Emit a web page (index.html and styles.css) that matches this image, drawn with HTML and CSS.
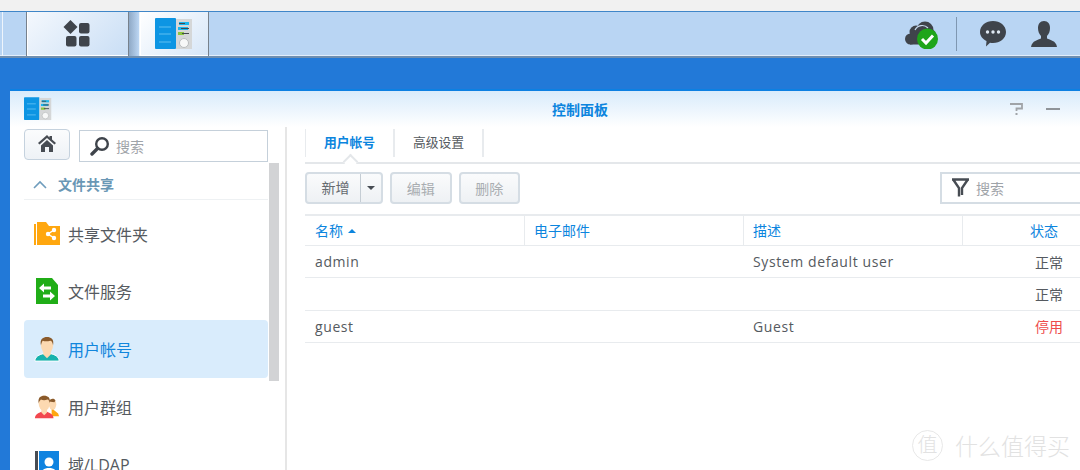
FILE: index.html
```html
<!DOCTYPE html>
<html lang="zh-CN">
<head>
    <meta charset="UTF-8">
    <title>控制面板</title>
    <link rel="stylesheet" href="styles.css">
</head>
<body>
    <svg class="defs" width="0" height="0">
        <symbol id="panel-icon" viewBox="0 0 38 32">
            <rect x="0" y="0" width="21" height="31" rx="1" fill="#0d95e3"/>
            <rect x="21" y="1" width="16" height="30" fill="#d5d7d8"/>
            <path d="M4 9h12M4 16h12M4 24h12" stroke="#5fc0f2" stroke-width="1.2"/>
            <rect x="24" y="4" width="10" height="3" fill="#19b6ee"/>
            <rect x="23" y="9" width="10" height="3" fill="#19b6ee"/>
            <rect x="23" y="14" width="6" height="3" fill="#8cc63f"/>
            <path d="M24 5.500h6M26 10.500h8M27 15.500h7" stroke="#44494f" stroke-width="1.200"/>
            <circle cx="29" cy="25" r="4.500" fill="#f7f8f8" stroke="#b9bcbe"/>
        </symbol>
    </svg>

    <div class="top-strip"></div>

    <header class="taskbar">
        <div class="task-gap"></div>
        <div class="task-btn task-main">
            <svg class="apps-icon" width="28" height="28" viewBox="0 0 28 28" fill="#3f444b">
                <path d="M7.500 0l7 7-7 7-7-7z"/>
                <rect x="16" y="3" width="10.500" height="10.500" rx="2"/>
                <rect x="3" y="16" width="10.500" height="10.500" rx="2"/>
                <rect x="16" y="16" width="10.500" height="10.500" rx="2"/>
            </svg>
        </div>
        <div class="task-space"></div>
        <div class="task-btn task-app">
            <svg width="38" height="32"><use href="#panel-icon"/></svg>
        </div>
        <div class="tray">
            <svg class="tray-cloud" width="34" height="30" viewBox="0 0 34 30">
                <g fill="#3f444b">
                    <circle cx="5.500" cy="20" r="5.500"/>
                    <circle cx="11" cy="13" r="6.500"/>
                    <circle cx="20" cy="11" r="8.500"/>
                    <circle cx="25" cy="16" r="6"/>
                    <rect x="5" y="16" width="24" height="9.500"/>
                </g>
                <path d="M10 11a8 8 0 0 1 13-2" fill="none" stroke="#c9dcf1" stroke-width="1.200"/>
                <circle cx="22.500" cy="20" r="10.500" fill="#1fa51a"/>
                <path d="M17 20l4 4 7-7.500" fill="none" stroke="#fff" stroke-width="3"/>
            </svg>
            <div class="tray-line"></div>
            <svg class="tray-chat" width="26" height="26" viewBox="0 0 26 26">
                <path d="M13 0c7 0 13 4.500 13 11s-6 11-13 11c-1 0-2 0-3-.300L6 25.500l.500-5.500C2.500 18 0 15 0 11 0 4.500 6 0 13 0z" fill="#3f444b"/>
                <circle cx="7.500" cy="11" r="1.700" fill="#dfe8f2"/>
                <circle cx="13" cy="11" r="1.700" fill="#dfe8f2"/>
                <circle cx="18.500" cy="11" r="1.700" fill="#dfe8f2"/>
            </svg>
            <svg class="tray-user" width="26" height="26" viewBox="0 0 26 26">
                <path d="M13 0c4 0 6 3 6 7 0 3-1 6-3 8v2.500c3 1.500 9 2 10 8.500H0c1-6.500 7-7 10-8.500V15c-2-2-3-5-3-8 0-4 2-7 6-7z" fill="#3f444b"/>
            </svg>
        </div>
    </header>

    <div class="desktop">
        <section class="window">
            <div class="win-head">
                <svg class="win-icon" width="28" height="24"><use href="#panel-icon"/></svg>
                <h1 class="win-title">控制面板</h1>
                <div class="win-tools">
                    <svg class="win-help" width="13" height="12" viewBox="0 0 13 12">
                        <path d="M0 1h12v4.500H6.500V8" fill="none" stroke="#a0a4a8" stroke-width="1.800"/>
                        <rect x="5.500" y="10" width="2" height="2" fill="#a0a4a8"/>
                    </svg>
                    <span class="win-min"></span>
                </div>
            </div>
            <div class="win-body">
                <aside class="sidebar">
                    <div class="side-top">
                        <button class="home-btn">
                            <svg width="18" height="17" viewBox="0 0 18 17" fill="#474c53">
                                <path d="M9 0L0 8l1.500 1.500L9 3l7.500 6.500L18 8l-4-3.500V1h-2.500v1.500z"/>
                                <path d="M3 10.500L9 5l6 5.500V17h-4v-5H7v5H3z"/>
                            </svg>
                        </button>
                        <div class="side-search">
                            <svg width="20" height="20" viewBox="0 0 20 20">
                                <circle cx="12" cy="8" r="5.800" fill="none" stroke="#3f444b" stroke-width="2.400"/>
                                <path d="M7.500 12.500L2 18" stroke="#3f444b" stroke-width="3.400" stroke-linecap="round"/>
                            </svg>
                            <span>搜索</span>
                        </div>
                    </div>
                    <div class="side-scroll">
                        <div class="side-list">
                            <div class="side-group">
                                <svg width="14" height="9" viewBox="0 0 14 9"><path d="M1 8l6-6 6 6" fill="none" stroke="#6f9dbd" stroke-width="1.600"/></svg>
                                <span>文件共享</span>
                            </div>
                            <div class="side-item">
                                <svg width="26" height="24" viewBox="0 0 26 24">
                                    <path d="M0 2h2v21H0z" fill="#ffa70f"/>
                                    <path d="M3 23V0h9l3 4h11v19z" fill="#ffa70f"/>
                                    <path d="M20 8l-6 4 6 4" fill="none" stroke="#fff" stroke-width="1.500"/>
                                    <circle cx="20" cy="8" r="2.200" fill="#fff"/>
                                    <circle cx="14" cy="12" r="2.200" fill="#fff"/>
                                    <circle cx="20" cy="16" r="2.200" fill="#fff"/>
                                </svg>
                                <span>共享文件夹</span>
                            </div>
                            <div class="side-item">
                                <svg width="26" height="26" viewBox="0 0 26 26">
                                    <path d="M2 0h16l6 7v19H2z" fill="#20ad17"/>
                                    <path d="M5 10l5-4.500v3h7v3h-7v3zM21 18l-5-4.500v3H9v3h7v3z" fill="#fff"/>
                                </svg>
                                <span>文件服务</span>
                            </div>
                            <div class="side-item active">
                                <svg width="26" height="26" viewBox="0 0 28 28">
                                    <path d="M1 27c0-5 5-7 9-8h8c4 1 9 3 9 8z" fill="#17b2ad" stroke="#fff"/>
                                    <path d="M10 17h8v3l-4 4-4-4z" fill="#fcd9b1"/>
                                    <ellipse cx="14" cy="10" rx="6.500" ry="9" fill="#fcd9b1"/>
                                    <path d="M7.500 10C6 3 10 1 14 1s8 2 6.500 9c-.5-3-1.500-5-3-5-3 1-6 1-8 0-1 1-1.500 3-2 5z" fill="#8a5a2b"/>
                                </svg>
                                <span>用户帐号</span>
                            </div>
                            <div class="side-item">
                                <svg width="26" height="26" viewBox="0 0 28 26">
                                    <path d="M19 5c3 0 4 3 3 6l-1 5 5 4 1 3H19z" fill="#ffa70f"/>
                                    <ellipse cx="20" cy="10" rx="4" ry="6" fill="#fcd9b1"/>
                                    <path d="M16 7c1-3 6-4 7-1l-1 2z" fill="#8a5a2b"/>
                                    <path d="M1 25c0-4 4-6 7-7h6c3 1 7 3 7 7z" fill="#f2484f"/>
                                    <path d="M8 15h6v4l-3 3-3-3z" fill="#fcd9b1"/>
                                    <ellipse cx="11" cy="9" rx="6" ry="8.500" fill="#fcd9b1"/>
                                    <path d="M5 9C4 3 7 1 11 1s7 2 6 8c-.5-2-1-4-2.500-4-2.500 1-5 1-7 0-1 1-2 2-2.500 4z" fill="#8a5a2b"/>
                                </svg>
                                <span>用户群组</span>
                            </div>
                            <div class="side-item">
                                <svg width="26" height="26" viewBox="0 0 26 26">
                                    <rect x="1" y="0" width="3" height="26" fill="#474c53"/>
                                    <rect x="5" y="0" width="20" height="26" fill="#0f83e0"/>
                                    <circle cx="15" cy="11" r="4.500" fill="#fff"/>
                                    <path d="M7 23c0-4 4-6 8-6s8 2 8 6z" fill="#fff"/>
                                </svg>
                                <span>域/LDAP</span>
                            </div>
                        </div>
                        <div class="side-bar"></div>
                    </div>
                </aside>
                <main class="content">
                    <nav class="tabs">
                        <div class="tab current">用户帐号</div>
                        <div class="tab">高级设置</div>
                    </nav>
                    <div class="toolbar">
                        <div class="btn split">
                            <span class="split-label">新增</span>
                            <span class="split-arrow"></span>
                        </div>
                        <div class="btn off">编辑</div>
                        <div class="btn off">删除</div>
                        <div class="filter">
                            <svg width="19" height="20" viewBox="0 0 19 20">
                                <path d="M1 1.500h17M2.500 2l5.500 8v8.500M16.500 2L11 10v7" fill="none" stroke="#474c53" stroke-width="2.400"/>
                            </svg>
                            <span>搜索</span>
                        </div>
                    </div>
                    <div class="grid-table">
                        <div class="grid-row grid-head">
                            <div class="cell">名称 <i class="sort"></i></div>
                            <div class="cell">电子邮件</div>
                            <div class="cell">描述</div>
                            <div class="cell status">状态</div>
                        </div>
                        <div class="grid-row">
                            <div class="cell">admin</div>
                            <div class="cell"></div>
                            <div class="cell">System default user</div>
                            <div class="cell status">正常</div>
                        </div>
                        <div class="grid-row">
                            <div class="cell"></div>
                            <div class="cell"></div>
                            <div class="cell"></div>
                            <div class="cell status">正常</div>
                        </div>
                        <div class="grid-row">
                            <div class="cell">guest</div>
                            <div class="cell"></div>
                            <div class="cell">Guest</div>
                            <div class="cell status stopped">停用</div>
                        </div>
                    </div>
                </main>
            </div>
        </section>
    </div>

    <div class="watermark">
        <span class="mark-seal">值</span>
        <span>什么值得买</span>
    </div>
</body>
</html>
```

FILE: styles.css
```css
html, body {
    margin: 0;
    height: 470px;
    overflow: hidden;
}
body {
    position: relative;
    font-family: "Open Sans", "Noto Sans CJK SC", sans-serif;
    font-size: 14px;
    color: #555a60;
    background: #2279d8;
}
.defs {
    position: absolute;
}
.top-strip {
    height: 11px;
    background: #f1f1f1;
}

/* barra superior */
.taskbar {
    display: flex;
    height: 47px;
    padding-left: 2px;
    box-sizing: border-box;
    background: #b9d5f3;
    border-top: 1px solid #3f86c8;
    border-bottom: 2px solid #6f8fb0;
    box-shadow: inset 0 -1px 0 #e4eefa;
}
.task-gap {
    width: 23px;
    border-left: 1px solid #eef5fc;
}
.task-btn {
    display: flex;
    align-items: center;
    justify-content: center;
    border-left: 1px solid #77818c;
    border-right: 1px solid #77818c;
    background: linear-gradient(135deg, #f4f8fd, #c9def5);
    box-shadow: inset 1px 0 0 #fff, inset 0 -1px 0 #fff;
}
.task-main {
    width: 101px;
}
.apps-icon {
    margin-left: -2px;
}
.task-space {
    width: 10px;
    background: linear-gradient(90deg, #8fa9c6, #bcd6f3);
}
.task-app {
    width: 68px;
    border-left-color: #eef5fc;
    background: linear-gradient(135deg, #fff, #d6e6f8);
}
.tray {
    display: flex;
    flex: 1;
    align-items: center;
    justify-content: flex-end;
    padding-right: 23px;
}
.tray-cloud {
    margin-right: 17px;
}
.tray-line {
    width: 1px;
    height: 34px;
    margin-right: 23px;
    background: #7f97b1;
}
.tray-chat {
    margin-right: 25px;
}

/* ventana */
.desktop {
    height: 412px;
    padding: 31px 0 0 10px;
    box-sizing: border-box;
    overflow: hidden;
}
.window {
    height: 381px;
    background: #fff;
    border-top: 2px solid #0c80e2;
}
.win-head {
    display: flex;
    align-items: center;
    height: 36px;
    background: linear-gradient(180deg, #d8ebfb, #fff);
}
.win-icon {
    margin-left: 14px;
}
.win-title {
    margin: 0 0 0 500px;
    font-size: 14px;
    font-weight: 700;
    color: #0c85de;
}
.win-tools {
    display: flex;
    align-items: center;
    margin-left: auto;
    padding-right: 20px;
}
.win-help {
    margin-right: 23px;
}
.win-min {
    width: 14px;
    height: 2px;
    background: #8f9499;
}
.win-body {
    display: flex;
    height: 343px;
}

/* columna lateral */
.sidebar {
    flex: none;
    width: 261px;
    margin-right: 18px;
    padding-left: 14px;
    border-right: 2px solid #e6e6e6;
}
.side-top {
    display: flex;
    gap: 9px;
    height: 36px;
    padding-top: 2px;
    box-sizing: border-box;
}
.home-btn {
    width: 46px;
    height: 31px;
    padding: 0;
    border: 1px solid #c5d2de;
    border-radius: 4px;
    background: linear-gradient(180deg, #fbfcfd, #eef2f6);
}
.side-search {
    display: flex;
    align-items: center;
    gap: 6px;
    width: 189px;
    height: 32px;
    margin-top: 1px;
    padding-left: 10px;
    border: 1px solid #c5d0da;
    box-sizing: border-box;
    font-size: 14px;
    color: #9fa4a9;
}
.side-scroll {
    display: flex;
}
.side-list {
    width: 244px;
}
.side-bar {
    width: 10px;
    height: 218px;
    margin-left: 1px;
    background: #d2d3d5;
}
.side-group {
    display: flex;
    align-items: center;
    gap: 11px;
    height: 37px;
    padding: 6px 0 0 9px;
    border-bottom: 1px solid #eef1f3;
    box-sizing: border-box;
    font-weight: 700;
    color: #6a97b5;
}
.side-item {
    display: flex;
    align-items: center;
    gap: 8px;
    height: 57.6px;
    padding-left: 10px;
    border-radius: 4px;
    font-size: 16px;
}
.side-item:nth-child(2) {
    margin-top: 5px;
}
.side-item svg {
    flex: none;
}
.side-item.active {
    background: #d9ecfc;
    color: #1186dc;
}

/* contenido */
.content {
    flex: 1;
    min-width: 0;
}
.tabs {
    display: flex;
    height: 35px;
    border-bottom: 2px solid #e4e7ea;
}
.tab {
    width: 89px;
    height: 28px;
    margin-top: 2px;
    border-right: 2px solid #e8ebee;
    box-sizing: border-box;
    font-size: 12.800px;
    line-height: 26px;
    text-align: center;
}
.tab.current {
    position: relative;
    width: 90px;
    border-left: 1px solid #e8ebee;
    font-weight: 700;
    color: #0c85de;
}
.tab.current::after {
    content: "";
    position: absolute;
    left: 39px;
    top: 27px;
    width: 9px;
    height: 9px;
    background: #fff;
    border-left: 2px solid #e4e7ea;
    border-top: 2px solid #e4e7ea;
    transform: rotate(45deg);
}
.toolbar {
    display: flex;
    gap: 7px;
    height: 32px;
    margin-top: 8px;
}
.btn {
    display: flex;
    align-items: center;
    justify-content: center;
    width: 61.500px;
    height: 32px;
    border: 2px solid #d5dde4;
    border-radius: 4px;
    box-sizing: border-box;
    background: linear-gradient(180deg, #fafbfc, #eef1f4);
}
.btn.off {
    color: #a9adb1;
}
.split {
    width: 78px;
    color: #666b70;
}
.split-label {
    flex: 1;
    padding-left: 4px;
    line-height: 28px;
    text-align: center;
    border-right: 1px solid #c5cdd4;
}
.split-arrow {
    width: 0;
    height: 0;
    margin: 0 6px;
    border-left: 4px solid transparent;
    border-right: 4px solid transparent;
    border-top: 4px solid #474c53;
}
.filter {
    display: flex;
    align-items: center;
    gap: 6px;
    width: 160px;
    height: 32px;
    margin-left: auto;
    margin-right: -20px;
    padding-left: 9px;
    border: 2px solid #d5dde4;
    box-sizing: border-box;
    color: #9fa4a9;
}
.grid-table {
    margin-top: 10px;
    border-top: 2px solid #e8ebee;
}
.grid-row {
    display: grid;
    grid-template-columns: 219px 219px 219px 1fr;
    height: 32.300px;
    border-bottom: 1px solid #e8ebee;
    box-sizing: border-box;
    align-items: center;
    letter-spacing: .6px;
}
.grid-head {
    height: 30px;
    color: #0c85de;
    letter-spacing: 0;
}
.grid-head .cell + .cell {
    padding-left: 9px;
    border-left: 1px solid #e8ebee;
}
.grid-head .cell {
    height: 100%;
    line-height: 29px;
}
.cell {
    padding-left: 10px;
}
.status {
    padding: 0 17px 0 0;
    text-align: right;
    letter-spacing: 0;
}
.grid-head .status {
    padding-right: 22px;
}
.stopped {
    color: #ee4b4b;
}
.sort {
    display: inline-block;
    width: 0;
    height: 0;
    margin: 0 0 3px 1px;
    border-left: 4px solid transparent;
    border-right: 4px solid transparent;
    border-bottom: 4px solid #0c85de;
}

/* marca de agua */
.watermark {
    position: absolute;
    right: 10px;
    bottom: 8px;
    display: flex;
    align-items: center;
    gap: 12px;
    font-size: 23px;
    font-weight: 300;
    color: #e2e2e2;
}
.mark-seal {
    width: 29px;
    height: 29px;
    border: 1px solid #e8e8e8;
    border-radius: 50%;
    font-size: 20px;
    line-height: 28px;
    text-align: center;
}
```
